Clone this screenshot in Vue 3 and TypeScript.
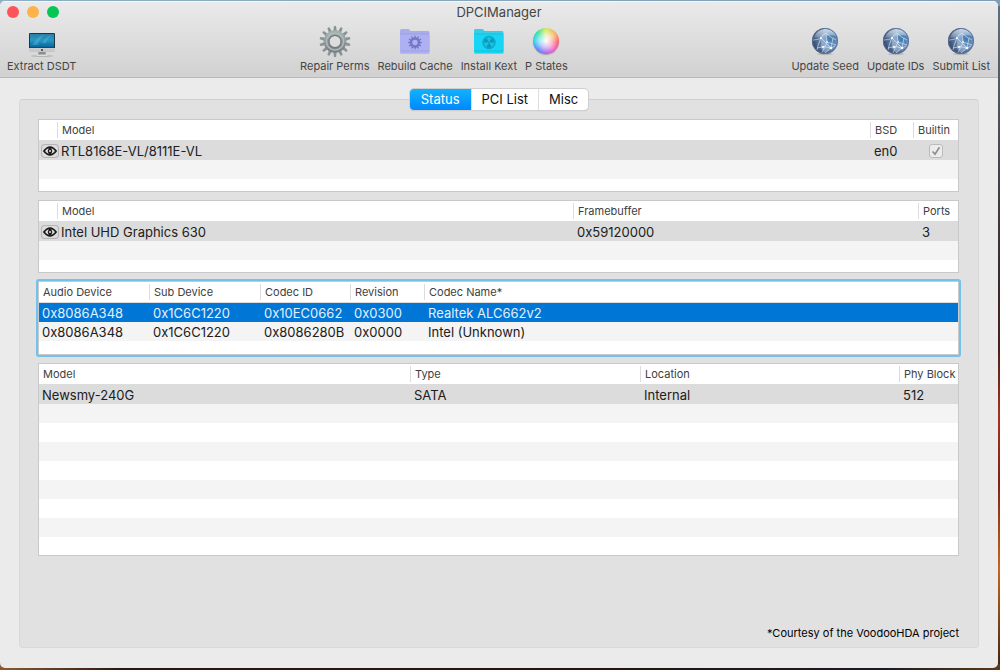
<script setup lang="ts">
import { ref } from 'vue'

type Icon = 'display' | 'gear' | 'cache' | 'kext' | 'wheel' | 'globe'
interface Tool { label: string; icon: Icon }
interface Column { title: string; width?: number; kind?: 'eye' | 'check' }
interface Grid {
  name: string
  size: 'short' | 'medium' | 'tall'
  columns: Column[]
  rows: string[][]
}

const toolGroups: Tool[][] = [
  [{ label: 'Extract DSDT', icon: 'display' }],
  [
    { label: 'Repair Perms', icon: 'gear' },
    { label: 'Rebuild Cache', icon: 'cache' },
    { label: 'Install Kext', icon: 'kext' },
    { label: 'P States', icon: 'wheel' },
  ],
  [
    { label: 'Update Seed', icon: 'globe' },
    { label: 'Update IDs', icon: 'globe' },
    { label: 'Submit List', icon: 'globe' },
  ],
]

const tabs = ['Status', 'PCI List', 'Misc']
const activeTab = ref('Status')
const focused = ref('Audio')

const grids: Grid[] = [
  {
    name: 'Network',
    size: 'short',
    columns: [
      { title: '', width: 18, kind: 'eye' },
      { title: 'Model' },
      { title: 'BSD', width: 43 },
      { title: 'Builtin', width: 45, kind: 'check' },
    ],
    rows: [['', 'RTL8168E-VL/8111E-VL', 'en0', '']],
  },
  {
    name: 'Graphics',
    size: 'short',
    columns: [
      { title: '', width: 18, kind: 'eye' },
      { title: 'Model' },
      { title: 'Framebuffer', width: 345 },
      { title: 'Ports', width: 40 },
    ],
    rows: [['', 'Intel UHD Graphics 630', '0x59120000', '3']],
  },
  {
    name: 'Audio',
    size: 'medium',
    columns: [
      { title: 'Audio Device', width: 110 },
      { title: 'Sub Device', width: 111 },
      { title: 'Codec ID', width: 90 },
      { title: 'Revision', width: 74 },
      { title: 'Codec Name*' },
    ],
    rows: [
      ['0x8086A348', '0x1C6C1220', '0x10EC0662', '0x0300', 'Realtek ALC662v2'],
      ['0x8086A348', '0x1C6C1220', '0x8086280B', '0x0000', 'Intel (Unknown)'],
    ],
  },
  {
    name: 'Storage',
    size: 'tall',
    columns: [
      { title: 'Model' },
      { title: 'Type', width: 230 },
      { title: 'Location', width: 259 },
      { title: 'Phy Block', width: 59 },
    ],
    rows: [['Newsmy-240G', 'SATA', 'Internal', '512']],
  },
]

const teeth = Array.from({ length: 14 }, (_, i) => (i * 360) / 14)
const smallTeeth = Array.from({ length: 12 }, (_, i) => i * 30)
</script>

<template>
  <div class="desktop">
    <main class="window">
      <header class="chrome">
        <div class="titlebar">
          <div class="lights">
            <button class="light close" aria-label="Close"></button>
            <button class="light minimise" aria-label="Minimise"></button>
            <button class="light grow" aria-label="Zoom"></button>
          </div>
          <h1>DPCIManager</h1>
        </div>
        <div class="toolbar">
          <div v-for="(group, g) in toolGroups" :key="g" class="group">
            <button v-for="tool in group" :key="tool.label" class="tool">
              <svg v-if="tool.icon === 'display'" class="icon" viewBox="0 0 32 32" aria-hidden="true">
                <defs>
                  <linearGradient id="screen" x1="0" y1="0" x2="0" y2="1">
                    <stop offset="0" stop-color="#2d7fa5" />
                    <stop offset=".45" stop-color="#2699c4" />
                    <stop offset="1" stop-color="#07639b" />
                  </linearGradient>
                  <linearGradient id="alu" x1="0" y1="0" x2="0" y2="1">
                    <stop offset="0" stop-color="#eceded" />
                    <stop offset="1" stop-color="#c4c6c7" />
                  </linearGradient>
                </defs>
                <ellipse cx="16" cy="30" rx="11" ry="1" fill="#a0a0a0" opacity=".6" />
                <path d="M12.700 25h6.600l.7 4h-8z" fill="#8b8d8e" />
                <path d="M10.500 30q0-1.200 1.500-1.500h8q1.500.3 1.500 1.500z" fill="#dcdddd" />
                <rect x="3" y="7" width="26" height="19" rx="1" fill="url(#alu)" />
                <path d="M3 22V8a1 1 0 0 1 1-1h24a1 1 0 0 1 1 1v14z" fill="#203540" />
                <rect x="4" y="8" width="24" height="13.500" fill="url(#screen)" />
                <path d="M6 19q6-9 12-10-5 4-6 10zM16 17q5-7 10-8-5 3-6 8z" fill="#7fd5e8" opacity=".28" />
                <circle cx="16" cy="24" r="1" fill="#34383a" />
              </svg>

              <svg v-else-if="tool.icon === 'gear'" class="icon" viewBox="0 0 32 32" aria-hidden="true">
                <defs>
                  <linearGradient id="steel" x1="0" y1="0" x2="0" y2="1">
                    <stop offset="0" stop-color="#a3b0b1" />
                    <stop offset="1" stop-color="#7b8284" />
                  </linearGradient>
                </defs>
                <g fill="#8a9496">
                  <path
                    v-for="a in teeth"
                    :key="a"
                    d="M14.200 6 14.900.2q1.100-.5 2.200 0L17.800 6z"
                    :transform="`rotate(${a} 16 15.500)`"
                  />
                </g>
                <circle cx="16" cy="15.500" r="8.400" fill="none" stroke="url(#steel)" stroke-width="5.600" />
                <circle cx="16" cy="15.500" r="8.600" fill="none" stroke="#b0b9bb" stroke-width="1.500" />
                <circle cx="16" cy="15.500" r="6.100" fill="none" stroke="#747b7e" stroke-width="1.200" />
              </svg>

              <svg v-else-if="tool.icon === 'cache'" class="icon" viewBox="0 0 32 32" aria-hidden="true">
                <path d="M1.500 27h29v.8h-29z" fill="#8c8c98" opacity=".5" />
                <path d="M1 4.500Q1 3 2.500 3H9q1 0 1.700 1l.8 1H29q1.500 0 1.500 1.500V25.500q0 1.500-1.500 1.500H2.500Q1 27 1 25.500z" fill="#a9adec" />
                <path d="M1 8h29.500v17.500q0 1.500-1.500 1.500H2.500Q1 27 1 25.500z" fill="#adb1f3" />
                <path d="M1.500 8h28.500M1.500 25h28.500" stroke="#9699dc" stroke-width=".6" />
                <g fill="#7478c6">
                  <path
                    v-for="a in smallTeeth"
                    :key="a"
                    d="M15 12.500 15.500 9.500h1l.5 3z"
                    :transform="`rotate(${a} 16 16.500)`"
                  />
                </g>
                <circle cx="16" cy="16.500" r="4" fill="none" stroke="#7478c6" stroke-width="2.600" />
              </svg>

              <svg v-else-if="tool.icon === 'kext'" class="icon" viewBox="0 0 32 32" aria-hidden="true">
                <path d="M1.500 27h29v.8h-29z" fill="#5c9aa5" opacity=".6" />
                <path d="M1 4.500Q1 3 2.500 3H9q1 0 1.700 1l.8 1H29q1.500 0 1.500 1.500V25.500q0 1.500-1.500 1.500H2.500Q1 27 1 25.500z" fill="#3ccbe6" />
                <path d="M1 8h29.500v17.500q0 1.500-1.500 1.500H2.500Q1 27 1 25.500z" fill="#19d5f4" />
                <path d="M1.500 8h28.500M1.500 25h28.500" stroke="#13b4d2" stroke-width=".6" />
                <circle cx="16" cy="16.500" r="6" fill="#14c3e2" stroke="#0da7c8" stroke-width="1.500" />
                <g fill="#0a98ba">
                  <path
                    v-for="a in [60, 180, 300]"
                    :key="a"
                    d="M15.200 15.100 13.400 12a5.200 5.200 0 0 1 5.200 0l-1.800 3.100z"
                    :transform="`rotate(${a} 16 16.500)`"
                  />
                  <circle cx="16" cy="16.500" r=".9" />
                </g>
              </svg>

              <span v-else-if="tool.icon === 'wheel'" class="icon wheel" aria-hidden="true"></span>

              <svg v-else class="icon" viewBox="0 0 32 32" aria-hidden="true">
                <defs>
                  <radialGradient id="ocean" cx=".72" cy=".42" r=".75">
                    <stop offset="0" stop-color="#3f7db3" />
                    <stop offset=".45" stop-color="#6f90bb" />
                    <stop offset="1" stop-color="#2f4265" />
                  </radialGradient>
                  <linearGradient id="sheen" x1="0" y1="0" x2="0" y2="1">
                    <stop offset="0" stop-color="#fff" stop-opacity=".7" />
                    <stop offset="1" stop-color="#fff" stop-opacity=".15" />
                  </linearGradient>
                </defs>
                <ellipse cx="16" cy="28" rx="8" ry="1.200" fill="#888" opacity=".4" />
                <circle cx="16" cy="15" r="13" fill="url(#ocean)" />
                <path d="M4.500 12Q8 3.500 16 2.700q8 .5 11.500 7-6-1-11.500.5T4.500 12z" fill="url(#sheen)" />
                <path d="M12 12l4-4 3 8 3 6-6 5-4-5z" fill="#c3d3e8" opacity=".4" />
                <g fill="none" stroke="#e2ecf7" stroke-width=".8" opacity=".75">
                  <path d="M4 14q5 0 8-2 2-4 5-5 5 5 10 7M12 12q-3 6-4 12M12 12l10 10M17 7l1 9 9 3M22 22l2-10M8 22q7-3 14 0l-6 5M18 16l-5 11M22 22l4-2" />
                </g>
                <g fill="#fff">
                  <circle cx="12" cy="12" r="1" />
                  <circle cx="22" cy="22" r="1.300" />
                  <circle cx="14" cy="21" r="1.100" />
                  <circle cx="18" cy="16" r=".8" />
                </g>
                <circle cx="16" cy="15" r="12.600" fill="none" stroke="#5a7195" stroke-width=".8" />
              </svg>
              <span>{{ tool.label }}</span>
            </button>
          </div>
        </div>
      </header>

      <section class="content">
        <nav class="tabs" aria-label="Views">
          <button
            v-for="tab in tabs"
            :key="tab"
            :class="['tab', { active: tab === activeTab }]"
            :aria-pressed="tab === activeTab"
            @click="activeTab = tab"
          >{{ tab }}</button>
        </nav>

        <div class="panel">
          <div
            v-for="grid in grids"
            :key="grid.name"
            :class="['grid', grid.size, { focused: grid.name === focused }]"
            @click="focused = grid.name"
          >
            <table :aria-label="grid.name">
              <colgroup>
                <col v-for="(c, i) in grid.columns" :key="i" :style="c.width ? { width: c.width + 'px' } : {}" />
              </colgroup>
              <thead>
                <tr>
                  <th v-for="(c, i) in grid.columns" :key="i" scope="col">{{ c.title }}</th>
                </tr>
              </thead>
              <tbody>
                <tr v-for="(row, r) in grid.rows" :key="r" :class="{ selected: r === 0 }">
                  <td v-for="(cell, i) in row" :key="i" :class="grid.columns[i].kind">
                    <button v-if="grid.columns[i].kind === 'eye'" class="eye-button" aria-label="Show details">
                      <svg viewBox="0 0 16 12" aria-hidden="true">
                        <path d="M.8 6q7.200-9.500 14.400 0-7.200 9.500-14.400 0z" fill="#1c1c1c" />
                        <path d="M3 6q2-2.500 4-2.800-2.500 2.800 0 5.600Q5 8.500 3 6zM13 6q-2-2.500-4-2.800 2.500 2.800 0 5.600Q11 8.500 13 6z" fill="#dedede" />
                        <circle cx="8" cy="6" r="1" fill="#e4e4e4" />
                      </svg>
                    </button>
                    <span v-else-if="grid.columns[i].kind === 'check'" class="check-box">
                      <input type="checkbox" checked disabled aria-label="Builtin" />
                      <svg viewBox="0 0 14 14" aria-hidden="true">
                        <path d="M3.500 7.500 6 10.200l4.500-7" fill="none" stroke="#8f8f8f" stroke-width="1.700" />
                      </svg>
                    </span>
                    <template v-else>{{ cell }}</template>
                  </td>
                </tr>
              </tbody>
            </table>
            <div :class="['filler', { odd: grid.rows.length % 2 === 1 }]"></div>
          </div>
          <p class="note">*Courtesy of the VoodooHDA project</p>
        </div>
      </section>
    </main>
  </div>
</template>

<style>
body {
  margin: 0;
}
</style>

<style scoped>
* {
  box-sizing: border-box;
}

button {
  font: inherit;
  color: inherit;
  border: 0;
  padding: 0;
  background: none;
}

.desktop {
  display: flex;
  min-height: 100vh;
  padding: 1px 2px 2px 0;
  font-family: Inter, "Liberation Sans", sans-serif;
  background:
    linear-gradient(90deg, #8eb0c6, #7c9db5) top / 100% 6px no-repeat,
    linear-gradient(90deg, #8a5a35, #2d1710 12%, #26140f 60%, #1d1824 88%, #5a3a18) bottom / 100% 6px no-repeat,
    linear-gradient(#5d7183, #4b4b57 20%, #3a2d30 40%, #4a2020 52%, #a8321c 62%, #7e2416 72%, #c4661e 85%, #3a2416);
}

.window {
  flex: 1;
  display: flex;
  flex-direction: column;
  border-radius: 5px;
  overflow: hidden;
  background: #ebebeb;
}

.chrome {
  height: 77px;
  border-top: 1px solid #f6f6f6;
  border-bottom: 1px solid #b9b9b9;
  background: linear-gradient(#eaeaea, #d1d1d1);
}

.titlebar {
  display: grid;
  grid-template-columns: 1fr auto 1fr;
  align-items: center;
  height: 20px;
  padding: 0 7px;
}

.lights {
  display: flex;
  gap: 8px;
}

.light {
  width: 12px;
  height: 12px;
  border-radius: 50%;
}

.close { background: #fc5458; }
.minimise { background: #fdb24a; }
.grow { background: #05c554; }

h1 {
  margin: 0;
  font-size: 13px;
  line-height: 20px;
  font-weight: 400;
  color: #454545;
}

.toolbar {
  display: flex;
  justify-content: space-between;
  padding: 4px 8px 0 7px;
}

.group {
  display: flex;
  gap: 8px;
}

.tool {
  display: flex;
  flex-direction: column;
  align-items: center;
  font-size: 11px;
  line-height: 16px;
  color: #454545;
  white-space: nowrap;
}

.icon {
  display: block;
  width: 32px;
  height: 32px;
}

.wheel {
  width: 26px;
  height: 26px;
  margin: 2px 0 4px;
  border-radius: 50%;
  background:
    radial-gradient(circle, #fff, rgba(255, 255, 255, 0.6) 35%, rgba(255, 255, 255, 0) 72%),
    conic-gradient(#d2e84e, #ff9a55 60deg, #fb4f62 95deg, #ea50c0 140deg, #a058ee 180deg, #4a7cf6 225deg, #1ccdf0 270deg, #1fe09a 315deg, #d2e84e);
  box-shadow: 0 1px 1px rgba(0, 0, 0, 0.25);
}

.content {
  flex: 1;
  display: flex;
  flex-direction: column;
  padding: 11px 19px 20px;
}

.tabs {
  display: flex;
  align-self: center;
  z-index: 1;
  margin-bottom: -11px;
  border-radius: 4px;
  background: #fff;
  box-shadow: 0 0 0 1px #cfcfcf, 0 1px 1px #b0b0b0;
  overflow: hidden;
}

.tab {
  height: 21px;
  padding: 0 10px;
  border-left: 1px solid #dedede;
  font-size: 13px;
  line-height: 21px;
  color: #111;
}

.tab.active {
  padding: 0 11px;
  border-left: 0;
  color: #fff;
  background: linear-gradient(#12b2fd, #0088fe);
}

.panel {
  flex: 1;
  display: flex;
  flex-direction: column;
  gap: 8px;
  padding: 19px 19px 6px 18px;
  border: 1px solid #d9d9d9;
  border-top-color: #cfcfcf;
  border-radius: 4px;
  background: #e1e1e1;
}

.grid {
  display: flex;
  flex-direction: column;
  border: 1px solid #c9c9c9;
  background: #fff;
}

.short { height: 73px; }
.medium { height: 74px; }
.tall { height: 193px; }

.focused {
  box-shadow: 0 0 0 2px #73c2ec;
  border-radius: 1px;
}

table {
  width: 100%;
  table-layout: fixed;
  border-collapse: separate;
  border-spacing: 0;
}

th {
  height: 21px;
  padding: 0 0 1px 5px;
  border-bottom: 1px solid #dcdcdc;
  text-align: left;
  font-size: 11px;
  line-height: 16px;
  font-weight: 400;
  color: #404040;
  white-space: nowrap;
}

th + th {
  background: linear-gradient(#dcdcdc, #dcdcdc) 0 2px / 1px 16px no-repeat;
}

td {
  height: 19px;
  padding: 1px 0 0 4px;
  font-size: 13px;
  line-height: 18px;
  color: #202020;
  white-space: nowrap;
}

th:first-child { padding-left: 4px; }
td:first-child { padding-left: 3px; }

tbody tr:nth-child(even) {
  background: #f4f4f4;
}

.selected {
  background: #dcdcdc;
}

.focused .selected {
  background: #0076d6;
}

.focused .selected td {
  color: #e3f0fb;
}

td.eye {
  padding: 0 0 0 2px;
}

.eye-button {
  display: flex;
  align-items: center;
  justify-content: center;
  width: 18px;
  height: 14px;
  border-radius: 4px;
  box-shadow: inset 0 0 0 1px #b4b4b4;
}

.eye-button svg {
  width: 16px;
  height: 12px;
}

td.check {
  padding: 0;
}

.check-box {
  display: grid;
  width: 14px;
  height: 14px;
  margin: 0 auto;
}

.check-box input,
.check-box svg {
  grid-area: 1 / 1;
  width: 14px;
  height: 14px;
  margin: 0;
}

.check-box input {
  appearance: none;
  border: 1px solid #bcbcbc;
  border-radius: 3px;
  background: #ececec;
}

.filler {
  flex: 1;
  background: repeating-linear-gradient(#fff 0 19px, #f4f4f4 19px 38px);
}

.filler.odd {
  background: repeating-linear-gradient(#f4f4f4 0 19px, #fff 19px 38px);
}

.note {
  margin: auto 0 0;
  text-align: right;
  font-size: 11px;
  line-height: 16px;
  color: #000;
}
</style>
